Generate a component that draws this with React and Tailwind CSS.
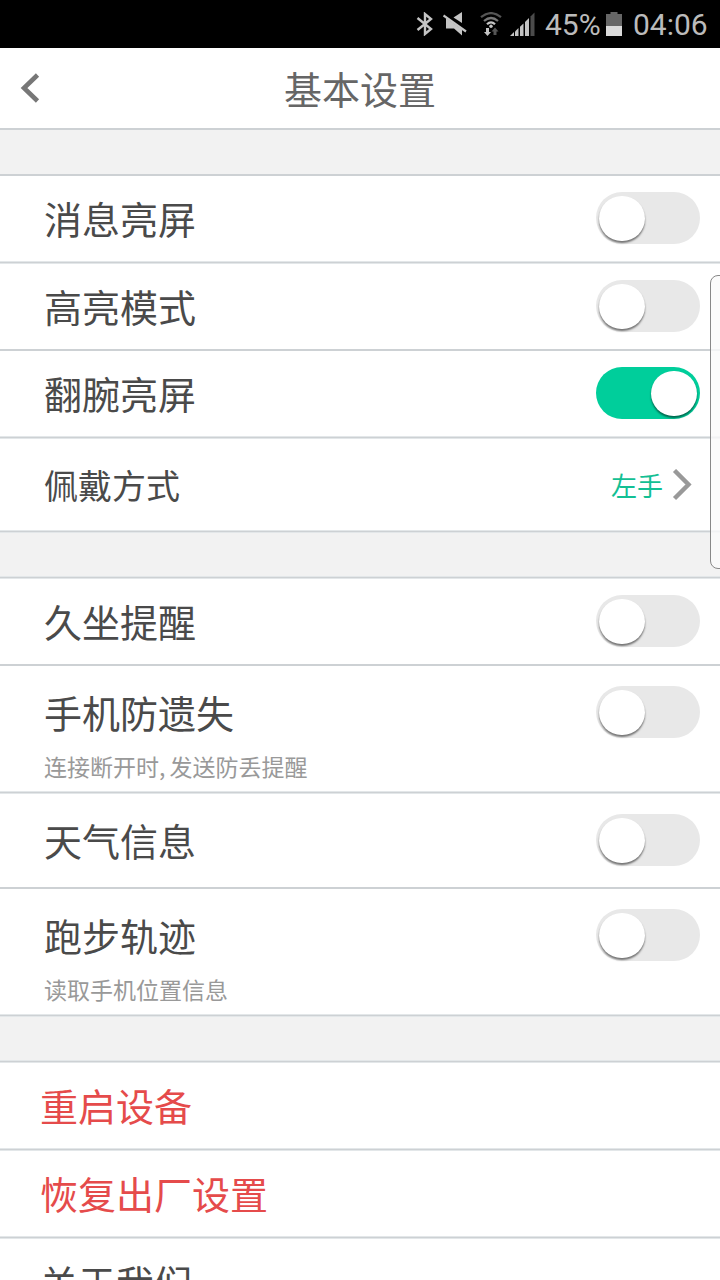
import React, { useState } from 'react'

// ── Status bar ────────────────────────────────────────────────────
function StatusBar() {
  return (
    <div className="flex h-12 shrink-0 items-center bg-black pl-[416px] text-[#c4c4c4]">
      <svg className="h-6 w-[17px] shrink-0" viewBox="0 0 17 24" fill="none" stroke="currentColor" strokeWidth="2.4">
        <path d="M1.5 6 L15 17 L9 22 V2 L15 7 L1.5 18" />
      </svg>
      <svg className="ml-[10px] h-6 w-6 shrink-0" viewBox="0 0 24 24" fill="currentColor">
        <path d="M19 0 V11 L10.5 5.5 Z" />
        <path d="M3 6 L19 17.5 V23.5 L11 16.5 H3 Z" />
        <path d="M0.5 3.5 L23 19.5" stroke="currentColor" strokeWidth="2.2" />
      </svg>
      <svg className="ml-[13px] h-6 w-[22px] shrink-0" viewBox="0 0 22 24" fill="none">
        <path d="M1 5.2 Q11 -3 21 5.2" stroke="#555" strokeWidth="2.2" />
        <path d="M4 9 Q11 3 18 9" stroke="#777" strokeWidth="2.2" />
        <path d="M7 12.3 Q11 8.3 15 12.3" stroke="currentColor" strokeWidth="2.2" />
        <circle cx="11" cy="14.2" r="1.7" fill="currentColor" />
        <path d="M6 16 H9 V20 H11 L7.5 24 L4 20 H6 Z" fill="currentColor" />
        <path d="M13.5 23 H16.5 V19.5 H18.5 L15 15.5 L11.5 19.5 H13.5 Z" fill="#555" />
      </svg>
      <svg className="ml-2 h-6 w-[25px] shrink-0" viewBox="0 0 25 24" fill="currentColor">
        <path d="M0 24 L4 20 V24 Z" />
        <path d="M5 19.5 L8.5 16 V24 H5 Z" />
        <path d="M10 14.8 L13.5 11.5 V24 H10 Z" />
        <path d="M15 10 L19 6 V24 H15 Z" />
        <path d="M20.5 4.5 L24.5 0.5 V24 H20.5 Z" fill="#4b4b4b" />
      </svg>
      <span className="ml-[10px] w-[56px] pt-0.5 font-['Roboto'] text-[30px] leading-none text-[#bbb]">45%</span>
      <svg className="ml-[5px] h-6 w-4 shrink-0" viewBox="0 0 16 24">
        <path d="M0 2 H4.5 V0 H11.5 V2 H16 V14 H0 Z" fill="#666" />
        <path d="M0 14 H16 V24 H0 Z" fill="#dadada" />
      </svg>
      <span className="ml-[11px] pt-0.5 font-['Roboto'] text-[30px] leading-none text-[#bbb]">04:06</span>
    </div>
  )
}

// soft lines have a lighter edge above and below
function Divider({ soft }) {
  if (!soft) return <div className="h-0.5 shrink-0 bg-[#cdd1d4]" />
  return <div className="h-[3px] shrink-0 border-y border-[#e3e7e9] bg-[#cdd1d4]" />
}

function Toggle({ defaultOn = false }) {
  const [on, setOn] = useState(defaultOn)
  return (
    <button
      onClick={() => setOn(!on)}
      className={`flex h-[52px] w-[104px] shrink-0 items-start rounded-full px-[3px] pt-1 ${
        on ? 'justify-end bg-[#00ce9b]' : 'justify-start bg-[#e8e8e8]'
      }`}
    >
      <span className="h-[45px] w-[46px] rounded-full bg-white shadow-[0_2px_2px_rgba(0,0,0,0.5)]" />
    </button>
  )
}

function Row({ label, note, className, children }) {
  return (
    <div className={`flex shrink-0 items-start justify-between pl-11 pr-5 ${className}`}>
      <div>
        <p className="text-[38px] leading-[52px]">{label}</p>
        {note && <p className="mt-[13px] text-[23px] leading-[30px] text-[#999] [word-spacing:-1px]">{note}</p>}
      </div>
      {children}
    </div>
  )
}

export default function App() {
  return (
    <div className="relative flex h-[1280px] w-[720px] flex-col overflow-hidden bg-white font-['Noto_Sans_CJK_SC',sans-serif] text-[#4a4a4a]">
      <StatusBar />

      {/* Header */}
      <header className="grid h-20 shrink-0 grid-cols-[60px_1fr_60px] items-center">
        <svg className="ml-5 h-8 w-5" viewBox="0 0 20 32" fill="none" stroke="#777" strokeWidth="4.6">
          <path d="M17.5 3 L4 16 L17.5 29" />
        </svg>
        <h1 className="text-center text-[38px] leading-none text-[#666]">基本设置</h1>
      </header>

      <Divider />
      <div className="h-11 shrink-0 bg-[#f2f2f2]" />
      <Divider />

      {/* Display */}
      <Row label="消息亮屏" className="h-[85px] pt-4"><Toggle /></Row>
      <Divider soft />
      <Row label="高亮模式" className="h-[85px] pt-4"><Toggle /></Row>
      <Divider />
      <Row label="翻腕亮屏" className="h-[85px] pt-4"><Toggle defaultOn /></Row>
      <Divider soft />
      <div className="flex h-[91px] shrink-0 items-center pl-11 pr-7">
        <span className="flex-1 text-[34px] leading-none">佩戴方式</span>
        <span className="text-[26px] leading-none text-[#13bf94]">左手</span>
        <svg className="ml-[9px] h-8 w-5" viewBox="0 0 20 32" fill="none" stroke="#999" strokeWidth="4.4">
          <path d="M2.5 1.5 L16.5 15.5 L2.5 29.5" />
        </svg>
      </div>

      <Divider soft />
      <div className="h-[43px] shrink-0 bg-[#f2f2f2]" />
      <Divider soft />

      {/* Reminders */}
      <Row label="久坐提醒" className="h-[85px] pt-4"><Toggle /></Row>
      <Divider />
      <Row label="手机防遗失" note="连接断开时, 发送防丢提醒" className="h-[125px] pt-5"><Toggle /></Row>
      <Divider soft />
      <Row label="天气信息" className="h-[93px] pt-5"><Toggle /></Row>
      <Divider />
      <Row label="跑步轨迹" note="读取手机位置信息" className="h-[125px] pt-5"><Toggle /></Row>

      <Divider soft />
      <div className="h-[43px] shrink-0 bg-[#f2f2f2]" />
      <Divider soft />

      {/* Device */}
      <Row label="重启设备" className="-ml-1 h-[85px] pt-4 text-[#e54b4b]" />
      <Divider soft />
      <Row label="恢复出厂设置" className="-ml-1 h-[85px] pt-4 text-[#e54b4b]" />
      <Divider soft />
      <Row label="关于我们" className="-ml-1 h-[85px] pt-[17px]" />

      {/* Edge panel handle */}
      <div className="absolute -right-3 top-[275px] h-[294px] w-[22px] rounded-lg border border-[#888] bg-[#fafafa]/80" />
    </div>
  )
}
